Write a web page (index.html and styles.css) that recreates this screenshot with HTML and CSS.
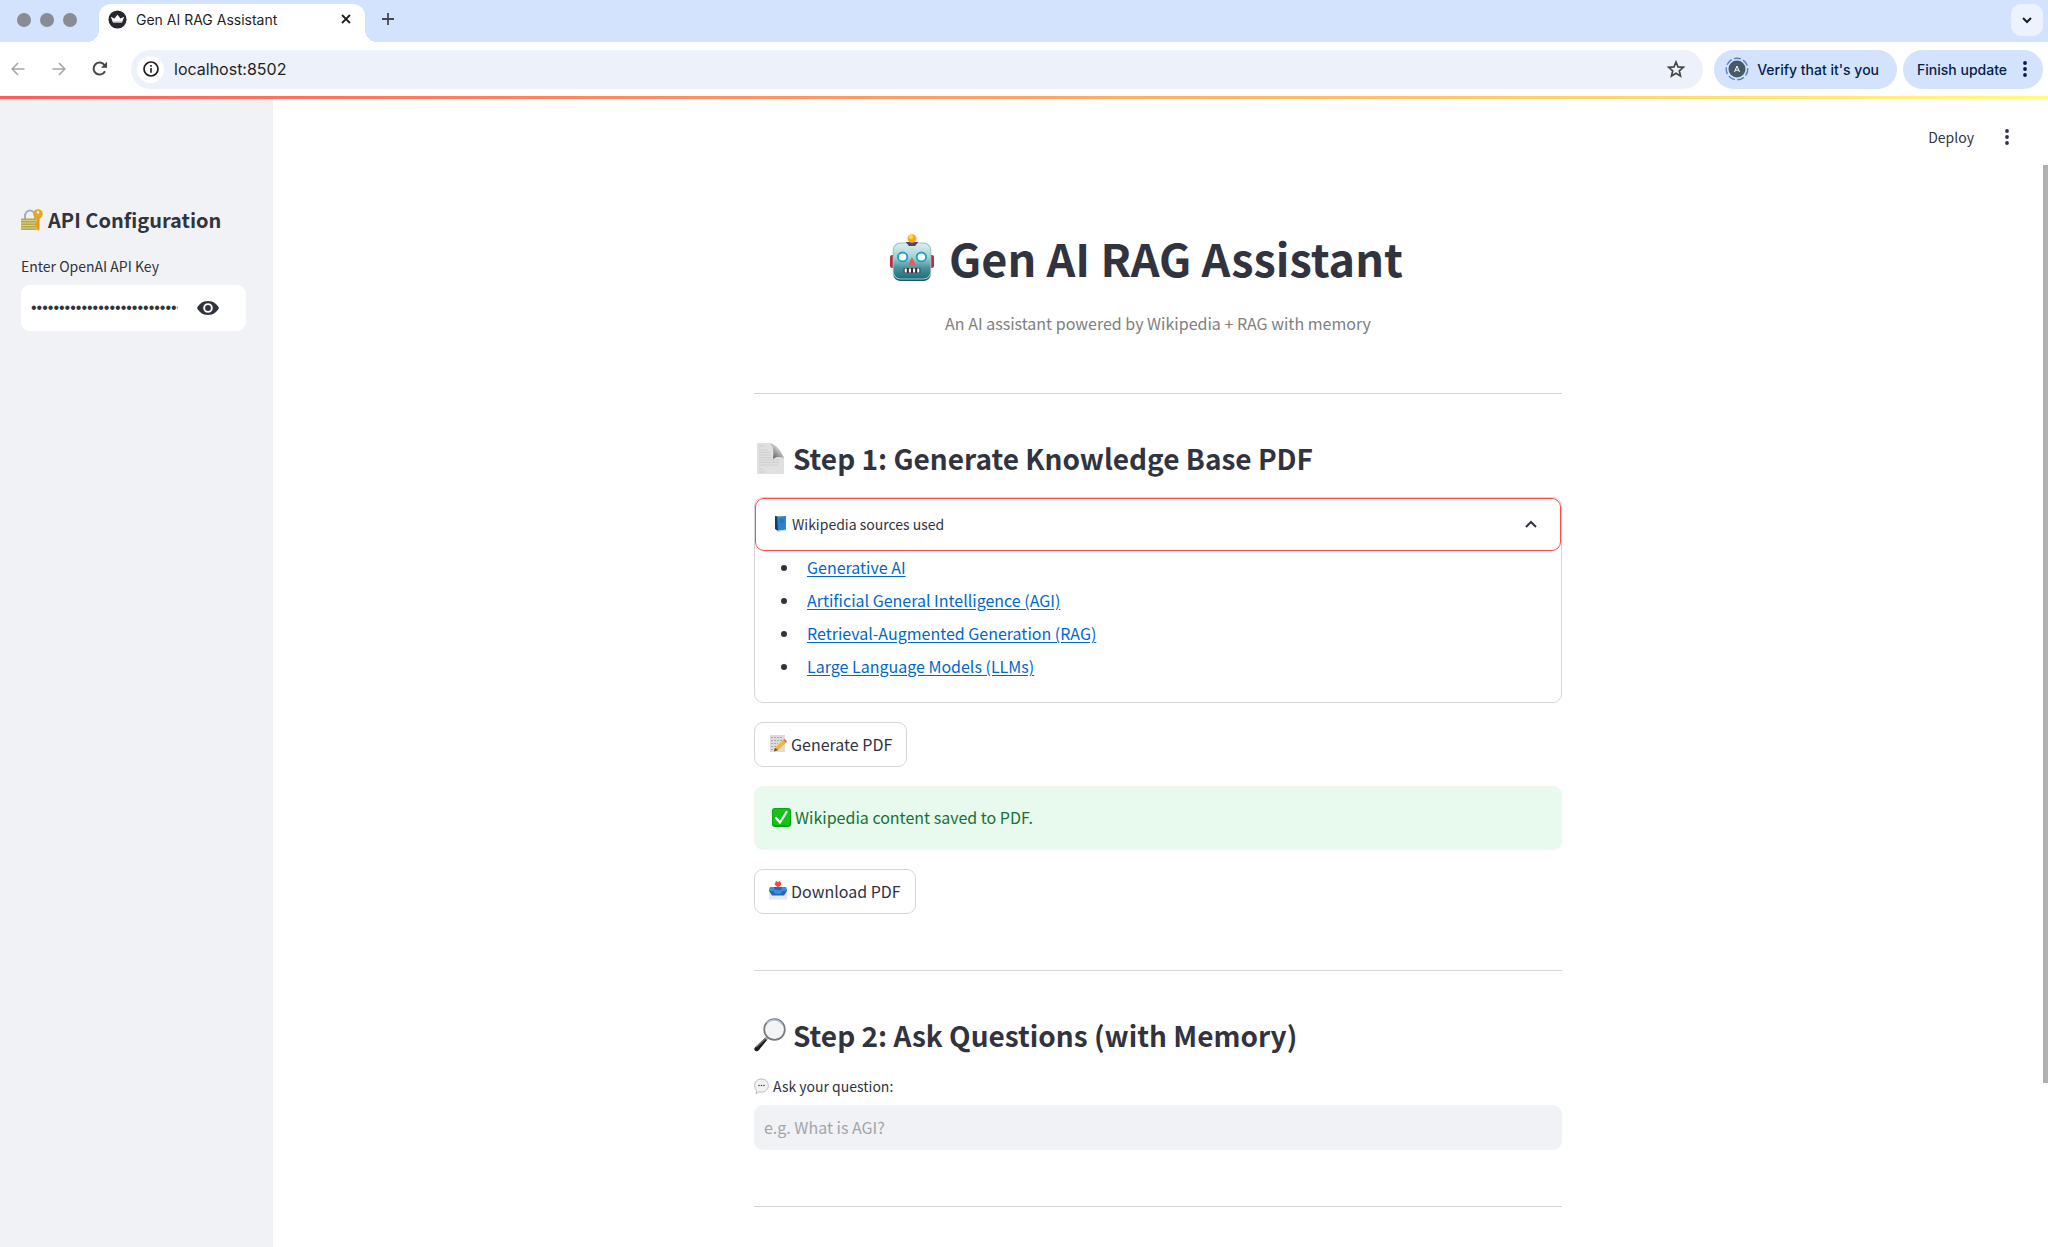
FILE: index.html
```html
<!DOCTYPE html>
<html lang="en">
<head>
<meta charset="utf-8">
<title>Gen AI RAG Assistant</title>
<link rel="stylesheet" href="styles.css">
</head>
<body>
<div class="window">
  <div class="tabstrip">
    <div class="lights"><i></i><i></i><i></i></div>
    <div class="tab">
      <svg class="favicon" viewBox="0 0 20 20"><circle cx="10" cy="10" r="9.5" fill="#262730"/><path d="M3 7l3.800 2L10 5l3.200 4L17 7l-2.200 6.200H5.200z" fill="#fff"/><path d="M5 12h10l-.4 1.400H5.400z" fill="#aaa"/></svg>
      <span class="tab-title">Gen AI RAG Assistant</span>
      <button class="plain" aria-label="Close tab"><svg width="10" height="10" viewBox="0 0 10 10"><path d="M1 1l8 8M9 1l-8 8" stroke="#1f1f1f" stroke-width="1.8"/></svg></button>
    </div>
    <button class="plain new-tab" aria-label="New tab"><svg width="12" height="12" viewBox="0 0 12 12"><path d="M6 0v12M0 6h12" stroke="#474747" stroke-width="1.8"/></svg></button>
    <button class="plain tab-search" aria-label="Search tabs"><svg width="10" height="7" viewBox="0 0 10 7"><path d="M1 1l4 4 4-4" fill="none" stroke="#1f1f1f" stroke-width="2"/></svg></button>
  </div>
  <div class="toolbar">
    <div class="nav">
      <button class="plain" aria-label="Back"><svg width="14" height="14" viewBox="0 0 14 14"><path d="M13.500 7H1.500M7 1L1.200 7l5.800 6" fill="none" stroke="#a5a6a8" stroke-width="1.600"/></svg></button>
      <button class="plain" aria-label="Forward"><svg width="14" height="14" viewBox="0 0 14 14"><path d="M.5 7h12M7 1l5.800 6L7 13" fill="none" stroke="#a5a6a8" stroke-width="1.600"/></svg></button>
      <button class="plain" aria-label="Reload"><svg width="16" height="16" viewBox="0 0 16 16"><path d="M13 10.200A6 6 0 1 1 12.600 4.200L14 5.800" fill="none" stroke="#474747" stroke-width="2"/><path d="M15 .8v6H9z" fill="#474747"/></svg></button>
    </div>
    <div class="omnibox">
      <button class="plain site-info" aria-label="Site information"><svg width="16" height="16" viewBox="0 0 16 16"><circle cx="8" cy="8" r="7" fill="none" stroke="#1f1f1f" stroke-width="1.700"/><path d="M8 7v4.700M8 4v1.700" stroke="#1f1f1f" stroke-width="1.600"/></svg></button>
      <input class="address" aria-label="Address" value="localhost:8502">
      <button class="plain" aria-label="Bookmark"><svg width="18" height="18" viewBox="0 0 18 18"><path d="M9 2l2 4.900 5.300.4-4 3.500 1.200 5.200L9 13.200 4.500 16l1.200-5.200-4-3.500L7 6.900z" fill="none" stroke="#474747" stroke-width="1.700"/></svg></button>
    </div>
    <div class="actions">
      <button class="chip"><svg width="24" height="24" viewBox="0 0 24 24"><circle cx="12" cy="12" r="10.800" fill="none" stroke="#5b7fbd" stroke-width="1.400" stroke-dasharray="7 2.500"/><circle cx="12" cy="12" r="8.500" fill="#455a64"/><path d="M9.500 15L12 9l2.500 6M10.400 13.200h3.200" fill="none" stroke="#fff" stroke-width="1"/></svg>Verify that it's you</button>
      <button class="chip">Finish update<svg width="4" height="16" viewBox="0 0 4 16"><g fill="#041e49"><circle cx="2" cy="2" r="1.900"/><circle cx="2" cy="8" r="1.900"/><circle cx="2" cy="14" r="1.900"/></g></svg></button>
    </div>
  </div>
  <div class="rainbow"></div>

  <div class="app">
    <aside class="sidebar">
      <h2 class="side-title"><svg width="22" height="22" viewBox="0 0 22 22"><path d="M4 10V7a5 5.500 0 0 1 10 0v3" fill="none" stroke="#9fb0bd" stroke-width="2"/><rect y="9.500" width="16" height="11.500" rx="1" fill="#b5a94e"/><path d="M0 11.500h16M0 14h16M0 16.500h16M0 19h16" stroke="#d8cf86" stroke-width="1"/><circle cx="17" cy="5" r="4.800" fill="#eba51f"/><circle cx="17" cy="3.400" r="1.300" fill="#f0f2f6"/><path d="M16 8h2.600v12l-1.300 2-1.300-2zM14.500 14h2v4h-2z" fill="#e79b16"/></svg>API Configuration</h2>
      <label for="key">Enter OpenAI API Key</label>
      <div class="key-box">
        <input id="key" type="password" value="0000000000000000000000000000000000000000">
        <button class="plain" aria-label="Show key"><svg width="22" height="14" viewBox="0 0 22 14"><path fill-rule="evenodd" d="M11 0c5 0 9 2.800 11 7-2 4.200-6 7-11 7S2 11.200 0 7c2-4.200 6-7 11-7zm0 2.200a4.800 4.800 0 1 0 0 9.600 4.800 4.800 0 0 0 0-9.600z" fill="#31333f"/><circle cx="11" cy="7" r="2.900" fill="#31333f"/></svg></button>
      </div>
    </aside>

    <div class="page">
      <header class="app-header">
        <button class="plain deploy">Deploy</button>
        <button class="plain" aria-label="Menu"><svg width="4" height="16" viewBox="0 0 4 16"><g fill="#31333f"><circle cx="2" cy="2" r="1.900"/><circle cx="2" cy="8" r="1.900"/><circle cx="2" cy="14" r="1.900"/></g></svg></button>
      </header>
      <main class="content">
        <h1><svg width="46" height="48" viewBox="0 0 44 48" preserveAspectRatio="none"><defs><linearGradient id="bot" x2="0" y2="1"><stop stop-color="#d9f3f1"/><stop offset=".4" stop-color="#a5cfd2"/><stop offset=".7" stop-color="#45909c"/><stop offset="1" stop-color="#16707f"/></linearGradient></defs><rect x="1" y="21" width="42" height="13" rx="2" fill="#b8283a"/><rect x="4" y="9" width="36" height="38" rx="7" fill="#1b5662"/><rect x="4" y="9" width="36" height="36" rx="7" fill="url(#bot)" stroke="#a9c4bd"/><path d="M16 8h12l-3 4h-6z" fill="#5c4278"/><circle cx="22" cy="4.500" r="4.300" fill="#f8a81c"/><circle cx="21" cy="3" r="2" fill="#ffdc50"/><circle cx="13" cy="23" r="4.500" fill="#fff" stroke="#1ba5c4" stroke-width="1.800"/><circle cx="31" cy="23" r="4.500" fill="#fff" stroke="#1ba5c4" stroke-width="1.800"/><path d="M22 23l3.500 8h-7z" fill="#e35b5f"/><rect x="14" y="34" width="16" height="5" rx="1" fill="#2a3338"/><path d="M16 34.500v4M20 34.500v4M24 34.500v4M28 34.500v4" stroke="#fff" stroke-width="2"/></svg>Gen AI RAG Assistant</h1>
        <p class="tagline">An AI assistant powered by Wikipedia + RAG with memory</p>
        <hr>
        <section class="step">
          <h2><svg width="32" height="33" viewBox="-2 0 32 33"><defs><linearGradient id="curl" x1="1" x2=".2" y1="0" y2="1"><stop stop-color="#f4f4f4"/><stop offset=".5" stop-color="#bbb"/><stop offset="1" stop-color="#555"/></linearGradient></defs><path d="M1 1h14l13 14v17H1z" fill="#e0e0e1"/><path d="M3 4h5M3 8h9M3 10.500h11M3 13h12M3 15.500h12M3 18h20M3 20.500h20M3 23h19M3 27h4M3 30h6" stroke="#c9c9ca" stroke-width=".8"/><path d="M14 1c3 3 4 8 3 16 4-3 7-2 11-1C25 9 21 3 14 1z" fill="url(#curl)"/></svg>Step 1: Generate Knowledge Base PDF</h2>
          <details open>
            <summary><svg width="13" height="17" viewBox="0 0 13 17"><path d="M1 1l3 .5V16l-3-2z" fill="#123c63"/><path d="M3 1.500L12 1v14l-8 1.500z" fill="#2f82c6"/><path d="M4 16l8-1" stroke="#cfe0ee"/><path d="M6 5h4M6 7h4" stroke="#2269a8"/></svg><span>Wikipedia sources used</span><svg class="chevron" width="12" height="8" viewBox="0 0 12 8"><path d="M1 7l5-5 5 5" fill="none" stroke="#31333f" stroke-width="2"/></svg></summary>
            <ul>
              <li><a href="#generative-ai">Generative AI</a></li>
              <li><a href="#agi">Artificial General Intelligence (AGI)</a></li>
              <li><a href="#rag">Retrieval-Augmented Generation (RAG)</a></li>
              <li><a href="#llm">Large Language Models (LLMs)</a></li>
            </ul>
          </details>
          <button class="action"><svg width="18" height="19" viewBox="0 0 18 19"><path d="M1 1h15v17H1z" fill="#dcdcdd"/><path d="M2 3.500h12M2 6.500h13M2 9.500h7M2 12.500h5M2 15.500h4" stroke="#aaa" stroke-dasharray="2 1"/><path d="M6 14l8-8 3 3-8 7-4 1.500z" fill="#f3b632"/><path d="M14 6l2-1 2 2.500L17 9z" fill="#e36a68"/><path d="M6 14l3 2-4 1.500z" fill="#6b4a2a"/></svg>Generate PDF</button>
          <div class="success" role="status"><svg width="19" height="19" viewBox="0 0 19 19"><rect width="19" height="19" rx="3" fill="#08a510"/><rect x="1" y="1" width="17" height="16" rx="2" fill="#13c31b"/><path d="M4 10l4 4.500L14.500 4" fill="none" stroke="#fff" stroke-width="2.200" stroke-linecap="round"/></svg>Wikipedia content saved to PDF.</div>
          <button class="action"><svg width="18" height="19" viewBox="0 0 18 19"><path d="M0 9h18v9.500H0z" fill="#e9e7e5"/><path d="M1 6h16l1 4-3 4.500H3L0 10z" fill="#2567b4"/><path d="M1 6h4l1 3h6l1-3h4l1 4h-4.500c-1 4-8 4-9 0H0z" fill="#3d8ddd"/><path d="M9 6.500L5.500 3.500 7 0l2 1 2-1 1.500 3.500z" fill="#f14a42"/></svg>Download PDF</button>
        </section>
        <hr>
        <section class="step">
          <h2><svg width="32" height="34" viewBox="0 0 32 34"><path d="M11.500 19.500l2 2-9 11c-1.500 1.800-5 0-4-2.500z" fill="#1c1c20"/><path d="M2 29l9-8" stroke="#777" stroke-width="1.500"/><path d="M10.500 20l2 2 2.500-3-1.500-1.500z" fill="#aaa"/><circle cx="20.500" cy="11.500" r="10.300" fill="#f2f4f5" stroke="#77797d" stroke-width="1.700"/><path d="M13 5a10 10 0 0 1 15 1" fill="none" stroke="#a6c5df" stroke-width="1.500"/></svg>Step 2: Ask Questions (with Memory)</h2>
          <label for="question"><svg width="15" height="17" viewBox="0 0 15 17"><path d="M7.500 1C11.500 1 14.300 3.500 14.300 7.500S11.500 14 7.500 14L5 13.800 2 16l.6-3.500C1.200 11.300.7 9.500.7 7.500.7 3.500 3.500 1 7.500 1z" fill="#f3f3f3" stroke="#bbb"/><g fill="#444"><circle cx="5" cy="7.500" r=".8"/><circle cx="7.500" cy="7.500" r=".8"/><circle cx="10" cy="7.500" r=".8"/></g></svg>Ask your question:</label>
          <input id="question" class="question" placeholder="e.g. What is AGI?">
        </section>
        <hr>
      </main>
    </div>
    <div class="scrollbar"><div class="thumb"></div></div>
  </div>
</div>
</body>
</html>
```
FILE: styles.css
```css
* { box-sizing: border-box; }
body {
  margin: 0;
  color: #31333f;
  background: #fff;
  font-family: "Noto Sans CJK SC", "Noto Sans", sans-serif;
  font-size: 16px;
}
svg { display: block; flex: none; }
button, input { font: inherit; color: inherit; }
h1, h2, p, ul { margin: 0; }
.plain {
  display: flex;
  align-items: center;
  justify-content: center;
  padding: 0;
  border: 0;
  background: none;
}
.window { display: flex; flex-direction: column; min-height: 100vh; }

/* Browser frame */
.tabstrip, .toolbar { font-family: Inter, sans-serif; font-size: 14px; color: #1f1f1f; }
.tabstrip {
  display: flex;
  align-items: flex-end;
  height: 42px;
  background: #d3e3fd;
}
.lights { display: flex; gap: 9px; align-self: center; padding: 0 22px 2px 17px; }
.lights i { width: 14px; height: 14px; border-radius: 50%; background: #878c95; }
.tab {
  position: relative;
  display: flex;
  align-items: center;
  gap: 9px;
  width: 266px;
  height: 38px;
  padding: 0 14px 8px 9px;
  border-radius: 12px 12px 0 0;
  background: #fff;
}
.tab::before, .tab::after {
  content: "";
  position: absolute;
  bottom: 0;
  width: 12px;
  height: 12px;
}
.tab::before { right: 100%; background: radial-gradient(circle at 0 0, #d3e3fd 12px, #fff 12px); }
.tab::after { left: 100%; background: radial-gradient(circle at 100% 0, #d3e3fd 12px, #fff 12px); }
.favicon { width: 19px; height: 19px; }
.tab-title { flex: 1; white-space: nowrap; }
.new-tab { width: 32px; height: 32px; margin: 0 0 7px 7px; }
.tab-search {
  width: 32px;
  height: 32px;
  margin: 0 5px 6px auto;
  border-radius: 10px;
  background: #ecf2fe;
}
.toolbar {
  display: flex;
  align-items: center;
  height: 54px;
  padding: 0 5px 0 2px;
}
.nav { display: flex; gap: 9px; padding-right: 15px; }
.nav .plain { width: 32px; height: 32px; }
.omnibox {
  flex: 1;
  display: flex;
  align-items: center;
  height: 39px;
  padding: 0 18px 0 6px;
  border-radius: 20px;
  background: #ecf1fa;
}
.site-info { width: 27px; height: 27px; border-radius: 50%; background: #fff; }
.address {
  flex: 1;
  padding: 0 10px;
  border: 0;
  background: none;
  font-size: 16px;
}
.actions { display: flex; gap: 6px; padding-left: 11px; }
.chip {
  display: flex;
  align-items: center;
  gap: 8px;
  height: 39px;
  padding: 0 18px 0 11px;
  border: 0;
  border-radius: 20px;
  background: #d3e3fd;
  color: #041e49;
  font-weight: 500;
}
.chip:last-child { gap: 16px; padding: 0 16px 0 14px; }
.rainbow { height: 3px; background: linear-gradient(90deg, #ff5c5c, #ffc46b 70%, #fffd80); }

/* Application */
.app { flex: 1; display: grid; grid-template-columns: 273px 1fr 5px; }
.sidebar { padding: 105px 27px 0 21px; background: #f0f2f6; }
.side-title {
  display: flex;
  align-items: center;
  gap: 5px;
  font-size: 20px;
  line-height: 32px;
  white-space: nowrap;
}
label { display: flex; align-items: center; gap: 4px; font-size: 14px; line-height: 24px; }
.sidebar label { margin: 18px 0 7px; }
.key-box {
  display: flex;
  align-items: center;
  gap: 19px;
  height: 46px;
  padding: 0 27px 0 10px;
  border-radius: 9px;
  background: #fff;
}
.key-box input {
  flex: 1;
  min-width: 0;
  padding: 0;
  border: 0;
  background: none;
  font-family: "Liberation Sans", sans-serif;
}
.page { display: flex; flex-direction: column; }
.app-header {
  display: flex;
  align-items: center;
  justify-content: flex-end;
  gap: 31px;
  height: 76px;
  padding-right: 34px;
}
.deploy { font-size: 14px; }
.content {
  display: flex;
  flex-direction: column;
  width: 100%;
  max-width: 808px;
  margin: 0 auto;
  padding: 56px 0 39px;
}
h1 {
  display: flex;
  align-items: center;
  justify-content: center;
  gap: 14px;
  padding: 0 24px 6px 0;
  font-size: 45px;
  line-height: 54px;
}
.tagline { margin-top: 18px; text-align: center; line-height: 28px; color: #808080; }
hr { width: 100%; height: 1px; margin: 56px 0 44px; border: 0; background: #d6d6d9; }
hr:last-child { margin-bottom: 0; }
.step { display: flex; flex-direction: column; align-items: flex-start; gap: 19px; }
.step h2 {
  display: flex;
  align-items: center;
  gap: 7px;
  margin-bottom: -4px;
  padding-bottom: 4px;
  font-size: 28px;
  line-height: 40px;
}
details {
  width: 100%;
  height: 206px;
  border: 1px solid #d6d6d9;
  border-radius: 9px;
}
summary {
  display: flex;
  align-items: center;
  gap: 5px;
  height: 53px;
  padding: 0 23px 2px 18px;
  border: 1px solid #ff4b4b;
  border-radius: 9px;
  font-size: 14px;
  list-style: none;
  outline: 0;
}
.chevron { margin-left: auto; }
ul { padding: 0 0 0 45px; line-height: 33px; }
li { padding-left: 7px; }
a { color: #0068c9; text-underline-offset: 2px; }
.action {
  display: flex;
  align-items: center;
  gap: 4px;
  height: 45px;
  padding: 0 14px 2px;
  border: 1px solid #d6d6d9;
  border-radius: 9px;
  background: #fff;
}
.success {
  display: flex;
  align-items: center;
  gap: 4px;
  width: 100%;
  height: 64px;
  padding: 0 18px 2px;
  border-radius: 9px;
  background: #e8f9ee;
  color: #177233;
}
.step label { margin-bottom: -12px; }
.question {
  width: 100%;
  height: 45px;
  padding: 0 10px 2px;
  border: 0;
  border-radius: 9px;
  background: #f0f2f6;
}
.question::placeholder { color: #a3a4aa; }
.thumb { height: 80%; margin-top: 66px; background: #b0b0b3; }
```
